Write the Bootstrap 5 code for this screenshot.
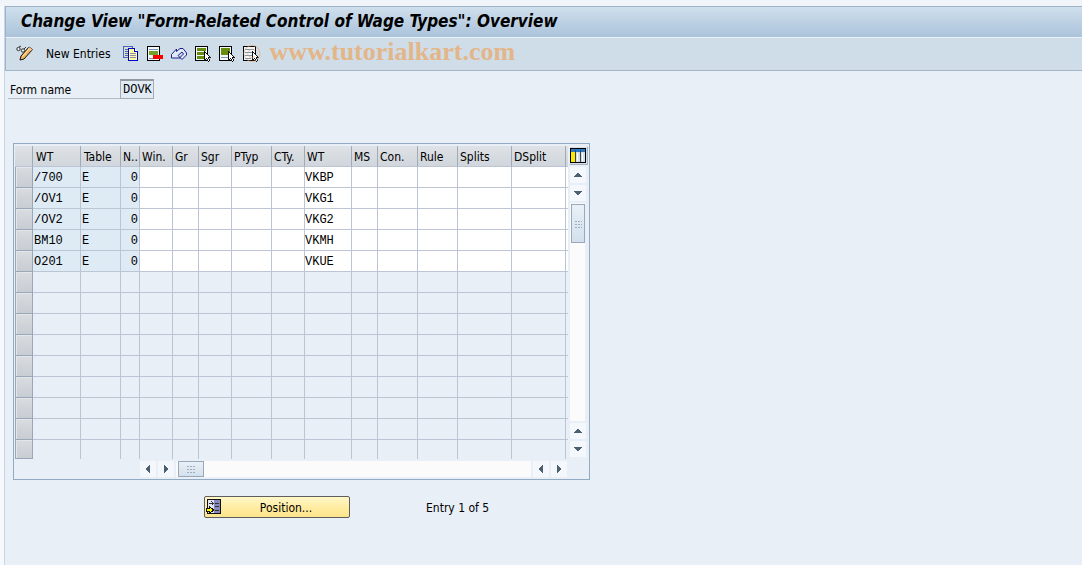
<!DOCTYPE html>
<html lang="en">
<head>
<meta charset="utf-8">
<meta name="viewport" content="width=device-width, initial-scale=1">
<title>Change View "Form-Related Control of Wage Types": Overview</title>
<link href="https://cdn.jsdelivr.net/npm/bootstrap@5.3.0/dist/css/bootstrap.min.css" rel="stylesheet">
<style>
body{background:#f5f8fc;color:#000;font-family:"DejaVu Sans Condensed","Noto Sans",sans-serif;font-size:12px;line-height:16px}
.top-strip{height:6px;background:#f1f5fa}
.screen{background:#e8eff6;border-left:1px solid #c9d6e6}
.title-bar{height:31px;border-top:1px solid #9db2c6;border-left:1px solid #9db2c6;background:linear-gradient(#cfdfec,#abc3db);padding:3px 0 0 15px}
.title-bar h1{font-size:17px;line-height:22px;font-weight:bold;font-style:italic}
.tool-bar{height:34px;background:#cfdde8;border-top:1px solid #e9f1f8;border-bottom:1px solid #a2b4c6;border-left:1px solid #9db2c6;padding:0 0 1px 10px}
.tool{border:0;background:none;padding:0;color:#000;display:block}
svg{shape-rendering:crispEdges;flex:none;display:block}
.smooth{shape-rendering:auto}
.watermark{font:bold 26px/28px "Liberation Serif",serif;color:#e3b68a;padding:0 0 3px 11px}
.seal{position:absolute;left:-1px;top:-1px}
.icon-set{padding-left:12px}
.form-row{padding:8px 0 0 3px}
.field-label{width:112px;height:20px;border-bottom:1px solid #b5bbc2;padding:2px 0 0 2px;line-height:18px}
.mono{font-family:"Liberation Mono",monospace;font-size:12px}
.form-value{width:34px;height:20px;border:1px solid #a5abb2;border-top:2px solid #93999f;background:#e0ebf5;padding:1px 0 0 2px;color:#000}
.panel{border:1px solid #93aac4;margin:44px 0 0 8px;padding:2px 1px}
.wage{table-layout:fixed;width:553px;border-collapse:separate;border-spacing:0}
.wage th,.wage td{height:21px;padding:0;line-height:18px;border-right:1px solid #bcc5d4;border-bottom:1px solid #bcc5d4;overflow:hidden;white-space:nowrap}
.wage thead th{font-weight:normal;padding:2px 0 0 3px;background:linear-gradient(#dfe2e6,#d0d6dc);border-right-color:#9eabba}
.wage thead th:nth-child(n+4){padding-left:2px}
.wage thead th:last-child{border-right:0}
.wage tbody td:last-child{border-right:0}
.wage td.key-cell{background:#deeaf4;padding:2px 1px 0}
.wage td.num{text-align:right}
.wage input{display:block;width:100%;height:20px;border:0;border-radius:0;padding:2px 0 0;background:#fff;color:#000}
.row-sel{display:block;width:100%;height:20px;border:1px solid #e4e7ea;border-right:0;border-bottom:0;background:linear-gradient(#d8dbdf,#c8cdd4);padding:0}
.wage tbody th{border-left:1px solid #9aa7b8;border-color:#9aa7b8}
.wage tbody tr:last-child>*{height:19px}
.wage tbody tr:last-child td{border-bottom:0}
.wage tbody tr:last-child .row-sel{height:18px}
.v-rail{width:20px;padding:0 3px 2px 2px;gap:2px}
.config{width:19px;height:19px;border:1px solid #a7b3c1;border-top-color:#edf1f5;border-left-color:#edf1f5;background:#d7dde4;padding:0;margin-left:-1px}
.arrow{width:16px;height:16px;background:#f4f7fb;border:0;padding:0;display:flex;align-items:center;justify-content:center;flex:none}
.track{background:#fbfbfc}
.thumb{background:linear-gradient(#e9f0f7,#d3e0eb);border:1px solid #98a9bb;display:flex;align-items:center;justify-content:center;flex:none}
.v-rail .thumb{width:14px;height:39px;margin:1px 0 0 1px}
.h-rail{margin:2px 21px 0 125px;gap:2px}
.h-rail .thumb{width:26px;height:16px;margin-left:2px}
.foot{padding:16px 0 0 199px}
.pos-btn{width:146px;height:22px;border:1px solid #5e5f5c;border-radius:2px;background:linear-gradient(#fff7c8,#ffeb9c 60%,#fbe48e);padding:0 0 0 1px;color:#000}
.foot span{padding-top:2px}
.foot .entry{padding-left:76px}
</style>
</head>
<body>
<div class="min-vh-100 d-flex flex-column">
<div class="top-strip"></div>
<main class="screen flex-grow-1 ms-1">
<header class="title-bar"><h1 class="m-0 text-nowrap">Change View "Form-Related Control of Wage Types": Overview</h1></header>
<nav class="tool-bar d-flex align-items-center" aria-label="Application toolbar">
<button class="tool" aria-label="Display or change"><svg class="smooth" width="18" height="18"><circle cx="2.500" cy="4" r="1.700" fill="#e8eef4" stroke="#333"/><circle cx="7" cy="5.500" r="1.700" fill="#e8eef4" stroke="#333"/><path d="M3 2l2-1M8 4l2-2" stroke="#333"/><path d="M4 15l1-4 8-9 3.500 2.500L8 14z" fill="#f5b45a" stroke="#111"/><path d="M6.500 11.500l7-8" stroke="#fff0c0"/><path d="M13 2l3.500 2.500-2 1.500L12 4z" fill="#f8c890"/></svg></button>
<button class="tool ms-2 ps-1 text-nowrap">New Entries</button>
<span class="icon-set d-flex gap-2">
<button class="tool" aria-label="Copy as"><svg width="16" height="16"><path d="M.5.5h9v11h-9z" fill="#d8dfc8" stroke="#4b64c8"/><path d="M2 3.500h4M2 5.500h3M2 7.500h3M2 9.500h3" stroke="#4b64c8"/><path d="M5.500 2.500h6l3 3v9h-9z" fill="#ffffa0" stroke="#0000c8"/><path d="M7 7.500h6M7 9.500h6M7 11.500h6" stroke="#9090a8"/><path d="M11.500 2.500v3h3" fill="#fff" stroke="#0000c8"/></svg></button>
<button class="tool" aria-label="Delete"><svg width="16" height="16"><path d="M.5.5h12v14H.5z" fill="#f4f7fb" stroke="#000"/><path d="M2 3.500h9M2 12.500h6" stroke="#7895aa"/><path d="M2 5h9v4H2z" fill="#76a02c"/><path d="M6 9h10v4H6z" fill="#f00"/></svg></button>
<button class="tool" aria-label="Undo"><svg class="smooth" width="16" height="16"><path d="M.5 8.500L5.500 3v2.500L9 2.500h3L15.500 7v2L11 13.500 9 11.500 12.500 8 11 6 7 9.500 9.500 12H.5z" fill="#dfeaf6" stroke="#20208c"/></svg></button>
<button class="tool" aria-label="Select all"><svg width="16" height="16"><path d="M.5.5h12v14H.5z" fill="#f4f7fb" stroke="#000"/><path d="M2 2h9v3H2zM2 6h9v3H2zM2 10h9v3H2z" fill="#668c10"/><path d="M9.500 5.500v9l2-2 2 3 1-1-1-3h2z" fill="#fff" stroke="#111"/></svg></button>
<button class="tool" aria-label="Select block"><svg width="16" height="16"><path d="M.5.5h12v14H.5z" fill="#f4f7fb" stroke="#000"/><path d="M2 2h9v7H2z" fill="#668c10"/><path d="M2 11.500h7" stroke="#7895aa"/><path d="M9.500 5.500v9l2-2 2 3 1-1-1-3h2z" fill="#fff" stroke="#111"/></svg></button>
<button class="tool position-relative" aria-label="Deselect all"><svg width="16" height="16"><path d="M.5.5h12v14H.5z" fill="#f4f7fb" stroke="#000"/><path d="M2 3.500h9M2 6.500h9M2 9.500h8M2 12.500h6" stroke="#7895aa"/><path d="M9.500 5.500v9l2-2 2 3 1-1-1-3h2z" fill="#fff" stroke="#111"/></svg><svg class="seal smooth" width="20" height="18" aria-hidden="true"><g fill="none" stroke="#e3a36a" stroke-opacity=".6"><circle cx="10" cy="8.500" r="8"/><path d="M13 5.500a4.200 4.200 0 1 0 0 6"/></g></svg></button>
</span>
<span class="watermark">www.tutorialkart.com</span>
</nav>
<div class="form-row d-flex"><label class="field-label" for="form-name">Form name</label><input id="form-name" class="form-value mono" value="DOVK" readonly></div>
<section class="panel d-inline-block align-top">
<div class="d-flex">
<table class="wage"><colgroup><col style="width:18px"><col style="width:48px"><col style="width:40px"><col style="width:19px"><col style="width:33px"><col style="width:26px"><col style="width:33px"><col style="width:40px"><col style="width:33px"><col style="width:47px"><col style="width:26px"><col style="width:40px"><col style="width:40px"><col style="width:54px"><col style="width:54px"><col style="width:2px"></colgroup>
<thead><tr><th></th><th>WT</th><th>Table</th><th>N..</th><th>Win.</th><th>Gr</th><th>Sgr</th><th>PTyp</th><th>CTy.</th><th>WT</th><th>MS</th><th>Con.</th><th>Rule</th><th>Splits</th><th>DSplit</th><th class="p-0"></th></tr></thead>
<tbody id="rows" class="mono"></tbody></table>
<div class="v-rail d-flex flex-column">
<button class="config" aria-label="Table settings"><svg width="16" height="16"><path d="M.5.5h15v14H.5z" fill="#fff" stroke="#000"/><path d="M1 1h14v3H1z" fill="#2878c8"/><path d="M1 4h4v10H1z" fill="#ffe800"/><path d="M6 4h4v10H6zM11 4h4v10h-4z" fill="#d4dce6"/><path d="M5.500 2v12M10.500 2v12" stroke="#345"/><path d="M7 5v8M12 5v8" stroke="#fff"/></svg></button>
<button class="arrow" aria-label="Scroll up"><svg width="8" height="4"><path d="M0 4h8L5 0H3z" fill="#4c6070"/></svg></button>
<button class="arrow" aria-label="Scroll down"><svg width="8" height="4"><path d="M0 0h8L5 4H3z" fill="#4c6070"/></svg></button>
<div class="track d-flex flex-column flex-grow-1"><div class="thumb"><svg width="7" height="8"><path d="M0 1h2M3 1h2M6 1h1M0 4h2M3 4h2M6 4h1M0 7h2M3 7h2M6 7h1" stroke="#9aafc0"/></svg></div></div>
<button class="arrow" aria-label="Line up"><svg width="8" height="4"><path d="M0 4h8L5 0H3z" fill="#4c6070"/></svg></button>
<button class="arrow" aria-label="Line down"><svg width="8" height="4"><path d="M0 0h8L5 4H3z" fill="#4c6070"/></svg></button>
</div>
</div>
<div class="h-rail d-flex">
<button class="arrow" aria-label="Scroll left"><svg width="4" height="8"><path d="M4 0v8L0 5V3z" fill="#4c6070"/></svg></button>
<button class="arrow" aria-label="Scroll right"><svg width="4" height="8"><path d="M0 0v8l4-3V3z" fill="#4c6070"/></svg></button>
<div class="track flex-grow-1"><div class="thumb"><svg width="8" height="7"><path d="M0 .5h2M3 .5h2M6 .5h2M0 3.500h2M3 3.500h2M6 3.500h2M0 6.500h2M3 6.500h2M6 6.500h2" stroke="#9aafc0"/></svg></div></div>
<button class="arrow" aria-label="Column left"><svg width="4" height="8"><path d="M4 0v8L0 5V3z" fill="#4c6070"/></svg></button>
<button class="arrow" aria-label="Column right"><svg width="4" height="8"><path d="M0 0v8l4-3V3z" fill="#4c6070"/></svg></button>
</div>
</section>
<div class="foot d-flex align-items-center">
<button class="pos-btn d-flex align-items-center"><svg width="17" height="16"><path d="M1.500.5h13v14h-13z" fill="#dfe5f2" stroke="#111"/><path d="M8 1h6v13H8z" fill="#8888bc"/><path d="M3 4.500h5M9 4.500h4M9 7.500h4M9 11.500h4" stroke="#333"/><path d="M5.500 2.500l2 2-2 2" fill="none" stroke="#333"/><path d="M.5 9.500h3v-2l4 3.500-4 3.500v-2h-3z" fill="#ff0" stroke="#111"/></svg><span class="flex-grow-1 text-center">Position...</span></button>
<span class="entry">Entry 1 of 5</span>
</div>
</main>
</div>
<script src="https://cdn.jsdelivr.net/npm/bootstrap@5.3.0/dist/js/bootstrap.bundle.min.js"></script>
<script>
const entries = [["/700","VKBP"],["/OV1","VKG1"],["/OV2","VKG2"],["BM10","VKMH"],["O201","VKUE"]];
const editable = ["Win.","Gr","Sgr","PTyp","CTy.","WT","MS","Con.","Rule","Splits","DSplit",""];
const visibleRows = 14;
let html = "";
for (let i = 0; i < visibleRows; i++) {
  html += `<tr><th><button class="row-sel" aria-label="Select row ${i + 1}"></button></th>`;
  const entry = entries[i];
  if (entry) {
    html += `<td class="key-cell">${entry[0]}</td><td class="key-cell">E</td><td class="key-cell num">0</td>`;
    html += editable.map(c => `<td><input aria-label="${c || "More"} ${i + 1}" value="${c === "WT" ? entry[1] : ""}"></td>`).join("");
  } else {
    html += "<td></td>".repeat(15);
  }
  html += "</tr>";
}
document.getElementById("rows").innerHTML = html;
</script>
</body>
</html>
